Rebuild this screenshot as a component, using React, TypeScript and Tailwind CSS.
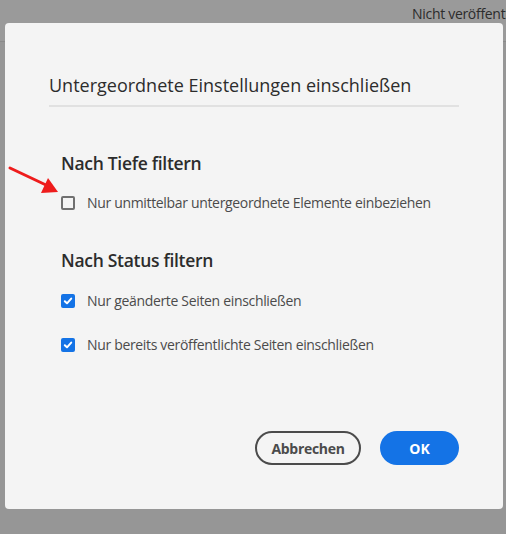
import React from "react";

function Check({ checked }: { checked: boolean }) {
  if (checked) {
    return (
      <span className="flex h-[14px] w-[14px] shrink-0 items-center justify-center rounded-[2px] bg-[#1473e6]">
        <svg width="10" height="10" viewBox="0 0 10 10">
          <path d="M1.8 5.2 L4 7.3 L8.2 2.6" fill="none" stroke="#fff" strokeWidth="2" strokeLinecap="round" strokeLinejoin="round" />
        </svg>
      </span>
    );
  }
  return <span className="h-[14px] w-[14px] shrink-0 rounded-[2px] border-2 border-[#707070] bg-[#f4f4f4]" />;
}

function Row({ checked, label }: { checked: boolean; label: string }) {
  return (
    <div className="flex h-[20px] items-center gap-[12px]">
      <Check checked={checked} />
      <span className="text-[14px] leading-[20px] tracking-[-0.33px] text-[#4b4b4b]">{label}</span>
    </div>
  );
}

export default function App() {
  return (
    <div
      className="relative h-[534px] w-[506px] overflow-hidden bg-[#969696]"
      style={{ fontFamily: '"Open Sans", "Noto Sans", sans-serif' }}
    >
      <div className="flex h-[42px] justify-start border-b border-[#8a8a8a] bg-[#9a9a9a] pt-[4px] pl-[412px]">
        <span className="whitespace-nowrap text-[14px] leading-[20px] tracking-[-0.3px] text-[#2c2c2c]">Nicht veröffentlicht</span>
      </div>
      <div className="absolute left-[5px] top-[23px] flex h-[486px] w-[498px] flex-col rounded-[4px] bg-[#f4f4f4] pl-[44px] pr-[44px]">
        <div className="pt-[44px] text-[18px] leading-[36px] text-[#2c2c2c]">Untergeordnete Einstellungen einschließen</div>
        <div className="mt-[2px] h-[2px] w-[410px] bg-[#e1e1e1]" />
        <div className="pl-[12px]">
          <div className="mt-[44px] text-[17.5px] font-semibold leading-[24px] tracking-[-0.3px] text-[#2c2c2c]">Nach Tiefe filtern</div>
          <div className="mt-[18px]">
            <Row checked={false} label="Nur unmittelbar untergeordnete Elemente einbeziehen" />
          </div>
          <div className="mt-[35px] text-[17.5px] font-semibold leading-[24px] tracking-[-0.3px] text-[#2c2c2c]">Nach Status filtern</div>
          <div className="mt-[19px] flex flex-col gap-[24px]">
            <Row checked={true} label="Nur geänderte Seiten einschließen" />
            <Row checked={true} label="Nur bereits veröffentlichte Seiten einschließen" />
          </div>
        </div>
        <div className="mt-auto mb-[44px] flex justify-end gap-[19px] pr-[0px]">
          <button className="h-[34px] w-[106px] rounded-full border-2 border-[#4b4b4b] text-[14px] font-bold tracking-[-0.3px] text-[#4b4b4b]">Abbrechen</button>
          <button className="h-[34px] w-[79px] rounded-full bg-[#1473e6] text-[14px] font-bold text-white">OK</button>
        </div>
      </div>
      <svg className="absolute left-0 top-0" width="80" height="220" viewBox="0 0 80 220">
        <line x1="10" y1="168" x2="46" y2="185" stroke="#ee1c1c" strokeWidth="3" strokeLinecap="round" />
        <polygon points="58,192 41,193 48,178" fill="#ee1c1c" />
      </svg>
    </div>
  );
}
